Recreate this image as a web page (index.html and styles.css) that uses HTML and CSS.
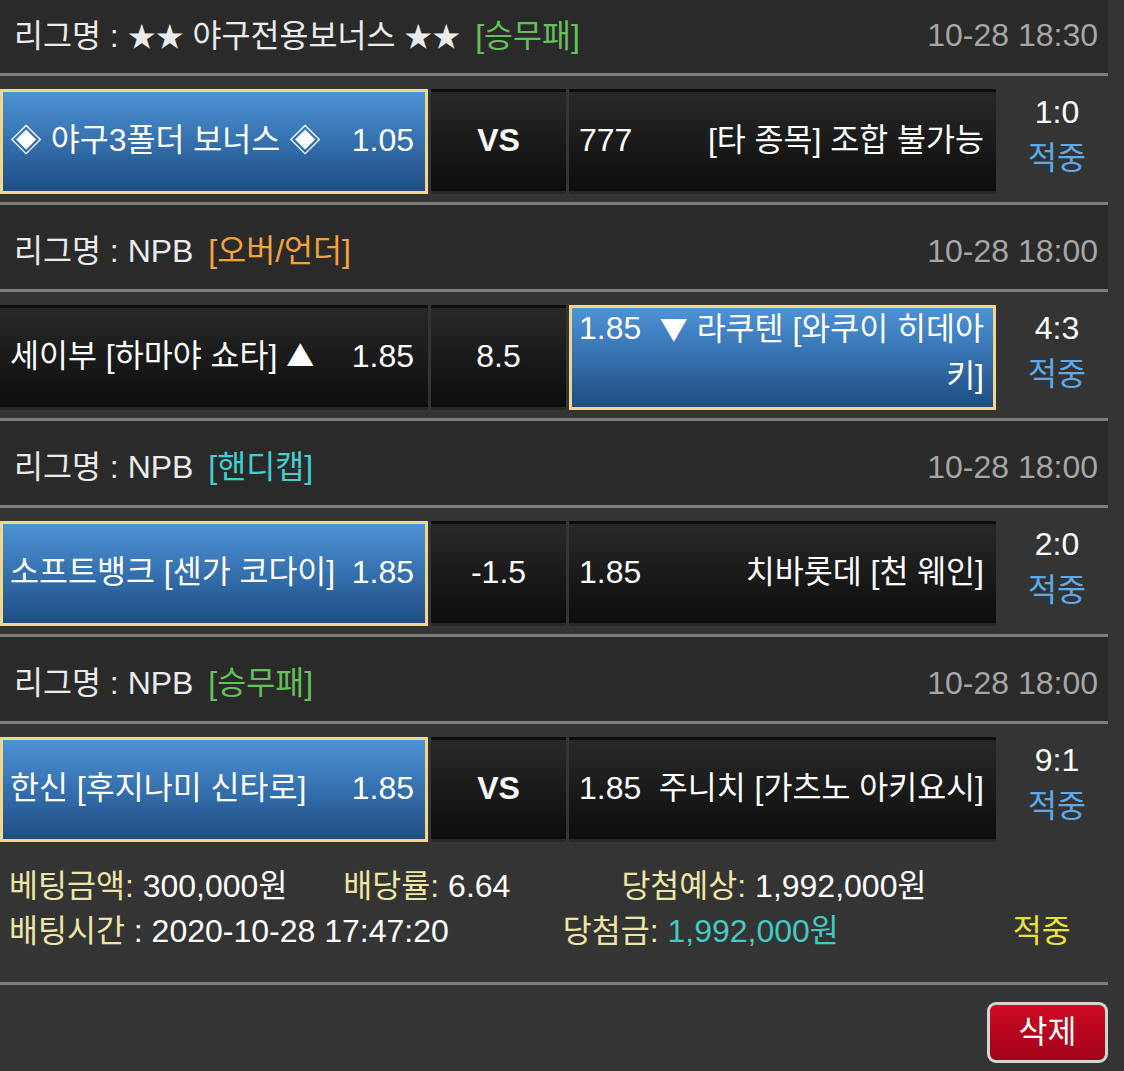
FILE: index.html
```html
<!DOCTYPE html>
<html lang="ko">
<head>
<meta charset="utf-8">
<title>베팅내역</title>
<link rel="stylesheet" href="styles.css">
</head>
<body>
<div class="slip">

  <section class="game">
    <div class="game-head">
      <div class="league"><span class="k">리그명</span> : <span class="star">★★</span> <span class="k">야구전용보너스</span> <span class="star">★★</span> <span class="type green">[<span class="k">승무패</span>]</span></div>
      <div class="time">10-28 18:30</div>
    </div>
    <div class="game-row">
      <div class="cell home selected"><span class="name"><span class="k">◈ 야구</span>3<span class="k">폴더 보너스 ◈</span></span><span class="odds">1.05</span></div>
      <div class="cell mid vs">VS</div>
      <div class="cell away"><div class="away-in"><span class="odds">777</span>[<span class="k">타 종목</span>] <span class="k">조합 불가능</span></div></div>
      <div class="result"><div>1:0</div><div class="hit k">적중</div></div>
    </div>
  </section>

  <section class="game">
    <div class="game-head">
      <div class="league"><span class="k">리그명</span> : NPB <span class="type orange">[<span class="k">오버</span>/<span class="k">언더</span>]</span></div>
      <div class="time">10-28 18:00</div>
    </div>
    <div class="game-row">
      <div class="cell home"><span class="name"><span class="k">세이부</span> [<span class="k">하마야 쇼타</span>] <span class="tri">▲</span></span><span class="odds">1.85</span></div>
      <div class="cell mid">8.5</div>
      <div class="cell away selected"><div class="away-in two-line"><span class="odds">1.85</span><span class="tri">▼</span> <span class="k">라쿠텐</span> [<span class="k">와쿠이 히데아</span><span class="k">키</span>]</div></div>
      <div class="result"><div>4:3</div><div class="hit k">적중</div></div>
    </div>
  </section>

  <section class="game">
    <div class="game-head">
      <div class="league"><span class="k">리그명</span> : NPB <span class="type cyan">[<span class="k">핸디캡</span>]</span></div>
      <div class="time">10-28 18:00</div>
    </div>
    <div class="game-row">
      <div class="cell home selected"><span class="name"><span class="k">소프트뱅크</span> [<span class="k">센가 코다이</span>]</span><span class="odds">1.85</span></div>
      <div class="cell mid">-1.5</div>
      <div class="cell away"><div class="away-in"><span class="odds">1.85</span><span class="k">치바롯데</span> [<span class="k">천 웨인</span>]</div></div>
      <div class="result"><div>2:0</div><div class="hit k">적중</div></div>
    </div>
  </section>

  <section class="game">
    <div class="game-head">
      <div class="league"><span class="k">리그명</span> : NPB <span class="type green">[<span class="k">승무패</span>]</span></div>
      <div class="time">10-28 18:00</div>
    </div>
    <div class="game-row">
      <div class="cell home selected"><span class="name"><span class="k">한신</span> [<span class="k">후지나미 신타로</span>]</span><span class="odds">1.85</span></div>
      <div class="cell mid vs">VS</div>
      <div class="cell away"><div class="away-in"><span class="odds">1.85</span><span class="k">주니치</span> [<span class="k">가츠노 아키요시</span>]</div></div>
      <div class="result"><div>9:1</div><div class="hit k">적중</div></div>
    </div>
  </section>

  <div class="summary">
    <div class="sum-line">
      <span class="item"><span class="lbl"><span class="k">베팅금액</span>:</span> 300,000<span class="k">원</span></span>
      <span class="item gap-s"><span class="lbl"><span class="k">배당률</span>:</span> 6.64</span>
      <span class="item gap-m"><span class="lbl"><span class="k">당첨예상</span>:</span> 1,992,000<span class="k">원</span></span>
    </div>
    <div class="sum-line">
      <span class="item"><span class="lbl k">배팅시간</span> : 2020-10-28 17:47:20</span>
      <span class="item gap-w"><span class="lbl"><span class="k">당첨금</span>:</span> <span class="teal">1,992,000<span class="k">원</span></span></span>
      <span class="item gap-l final k">적중</span>
    </div>
  </div>

  <div class="actions">
    <button class="btn-delete" type="button"><span class="k">삭제</span></button>
  </div>

</div>
</body>
</html>
```

FILE: styles.css
```css
html, body {
  margin: 0;
  padding: 0;
}

body {
  background: #343434;
  color: #ffffff;
  font-family: "Liberation Sans", "Noto Sans CJK KR", sans-serif;
  font-size: 32px;
  overflow: hidden;
}

.k {
  font-size: 31.5px;
}

.star {
  font-family: "Noto Sans CJK KR", sans-serif;
  font-size: 28px;
}

.tri {
  font-family: "Noto Sans CJK KR", sans-serif;
  font-size: 28px;
}

.slip {
  width: 1108px;
  margin-top: -14px;
}

/* group header */
.game-head {
  display: flex;
  justify-content: space-between;
  align-items: center;
  height: 76px;
  padding: 8px 10px 0 14px;
  background: #2a2a2a;
  border-top: 3px solid #7d7d7d;
  border-bottom: 3px solid #7d7d7d;
  line-height: 40px;
  white-space: nowrap;
}

.league {
  color: #ebebeb;
}

.type {
  margin-left: 6px;
}

.green { color: #63c05a; }
.orange { color: #f3a23e; }
.cyan { color: #43cfcf; }

.time {
  color: #a6a6a6;
}

/* game row */
.game-row {
  display: flex;
  height: 105px;
  padding: 13px 0 8px;
}

.cell {
  box-sizing: border-box;
  height: 105px;
  border: 3px solid transparent;
  margin-right: 3px;
  padding-bottom: 4px;
  background: linear-gradient(#282828, #0d0d0d);
  line-height: 46px;
  display: flex;
  align-items: center;
  white-space: nowrap;
}

.home {
  width: 428px;
  padding-left: 7px;
  padding-right: 11px;
  justify-content: space-between;
}

.mid {
  width: 135px;
  justify-content: center;
}

.vs {
  font-weight: bold;
}

.away {
  width: 427px;
  padding-left: 7px;
  padding-right: 9px;
  margin-right: 0;
  white-space: normal;
}

.away-in {
  display: flow-root;
  width: 100%;
  text-align: right;
}

.away-in.two-line {
  line-height: 47px;
  margin-bottom: 6px;
}

.away-in .odds {
  float: left;
}

.selected {
  background: linear-gradient(#4d93d7, #1d4d84);
  border-color: #f1d68e;
}

.result {
  flex: 1;
  padding-left: 10px;
  text-align: center;
  line-height: 46px;
}

.hit {
  color: #5eaae8;
}

/* summary */
.summary {
  padding: 14px 0 28px 9px;
  height: 90px;
  border-bottom: 3px solid #7d7d7d;
  line-height: 45px;
}

.sum-line {
  display: flex;
  white-space: nowrap;
}

.gap-s { margin-left: 56px; }
.gap-m { margin-left: 111px; }
.gap-w { margin-left: 114px; }
.gap-l { margin-left: 174px; }

.lbl {
  color: #eee6a4;
}

.teal {
  color: #45c9c3;
}

.final {
  color: #e9e23c;
}

/* actions */
.actions {
  display: flex;
  justify-content: flex-end;
  padding-top: 17px;
}

.btn-delete {
  box-sizing: border-box;
  width: 121px;
  height: 61px;
  border: 3px solid #d3d3d3;
  border-radius: 9px;
  background: linear-gradient(#cd0b23, #a2001a);
  color: #ffffff;
  font-family: inherit;
  font-size: 32px;
  line-height: 1;
  display: flex;
  align-items: center;
  justify-content: center;
  padding: 0;
}
```
